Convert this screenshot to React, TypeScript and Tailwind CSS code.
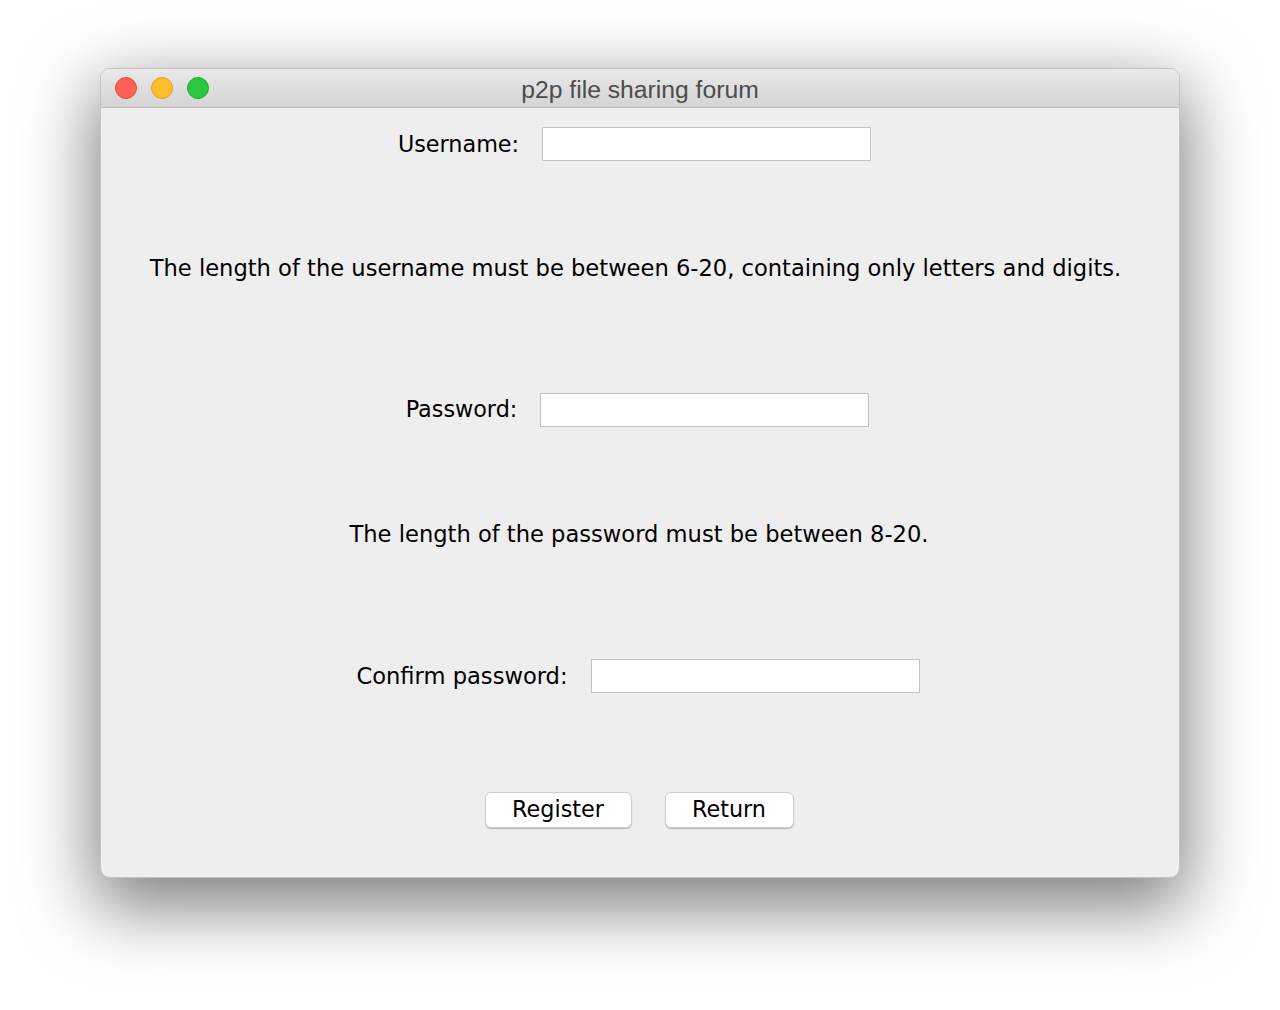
export default function App() {
  const body = { fontFamily: '"DejaVu Sans", "Lucida Grande", sans-serif' };

  return (
    <div className="w-[1280px] h-[1010px] bg-white pt-[68px] pl-[100px]">
      <div className="w-[1080px] h-[810px] rounded-[10px] overflow-hidden border border-[#c4c4c4] bg-[#eeeeee] shadow-[0_24px_70px_6px_rgba(0,0,0,0.5)] flex flex-col">
        {/* Title bar */}
        <div className="relative h-[39px] shrink-0 bg-gradient-to-b from-[#e9e9e9] to-[#d4d4d4] border-b border-[#b9b9b9] flex items-center justify-center">
          <div className="absolute left-[14px] top-[8px] flex gap-[14px]">
            <span className="w-[22px] h-[22px] rounded-full bg-[#fe5f57] border border-[#e2463f]" />
            <span className="w-[22px] h-[22px] rounded-full bg-[#febc2e] border border-[#e1a116]" />
            <span className="w-[22px] h-[22px] rounded-full bg-[#28c840] border border-[#1aab29]" />
          </div>
          <span
            className="text-[24.7px] text-[#4c4c4c] pt-[3px]"
            style={{ fontFamily: '"Liberation Sans", Arial, sans-serif' }}
          >
            p2p file sharing forum
          </span>
        </div>

        {/* Content */}
        <div className="flex flex-col text-[22.3px] text-black" style={body}>
          <div className="mt-[19px] flex items-center justify-center pr-[11px]">
            <span className="pt-[1px]">Username:</span>
            <input className="ml-[23px] w-[329px] h-[34px] bg-white border border-[#c3c3c3] outline-none" />
          </div>

          <div className="mt-[91px] h-[34px] flex items-center justify-center pr-[9px] text-[22.6px]">
            The length of the username must be between 6-20, containing only letters and digits.
          </div>

          <div className="mt-[106px] flex items-center justify-center pr-[5px]">
            <span className="pt-[1px]">Password:</span>
            <input className="ml-[23px] w-[329px] h-[34px] bg-white border border-[#c3c3c3] outline-none" />
          </div>

          <div className="mt-[91px] h-[34px] flex items-center justify-center pr-[2px] text-[22.6px]">
            The length of the password must be between 8-20.
          </div>

          <div className="mt-[107px] flex items-center justify-center pr-[4px]">
            <span className="pt-[1px] text-[22.6px]">Confirm password:</span>
            <input className="ml-[23px] w-[329px] h-[34px] bg-white border border-[#c3c3c3] outline-none" />
          </div>

          <div className="mt-[98px] flex items-center justify-center gap-[33px] pr-[2px]">
            <button className="w-[147px] h-[36px] bg-white rounded-[6px] border border-[#cfcfcf] shadow-[0_1px_1px_rgba(0,0,0,0.25)] text-[22.3px]">
              Register
            </button>
            <button className="w-[129px] h-[36px] bg-white rounded-[6px] border border-[#cfcfcf] shadow-[0_1px_1px_rgba(0,0,0,0.25)] text-[22.3px]">
              Return
            </button>
          </div>
        </div>
      </div>
    </div>
  );
}
